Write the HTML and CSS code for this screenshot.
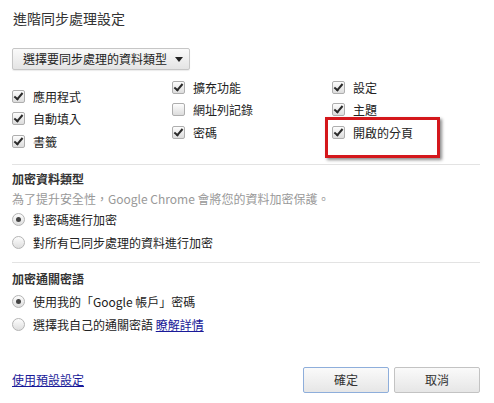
FILE: index.html
```html
<!DOCTYPE html>
<html lang="zh-Hant">

<head>
    <meta charset="UTF-8">
    <title>進階同步處理設定</title>
    <link rel="stylesheet" href="styles.css">
</head>

<body>
    <section class="dialog">
        <h1 class="title">進階同步處理設定</h1>

        <!-- 資料類型 -->
        <div class="select">
            <span>選擇要同步處理的資料類型</span>
            <span class="arrow"></span>
        </div>

        <div class="types">
            <ul class="col col-first">
                <li><span class="box checked"></span>應用程式</li>
                <li><span class="box checked"></span>自動填入</li>
                <li><span class="box checked"></span>書籤</li>
            </ul>
            <ul class="col">
                <li><span class="box checked"></span>擴充功能</li>
                <li><span class="box"></span>網址列記錄</li>
                <li><span class="box checked"></span>密碼</li>
            </ul>
            <ul class="col">
                <li><span class="box checked"></span>設定</li>
                <li><span class="box checked"></span>主題</li>
                <li><span class="box checked"></span>開啟的分頁</li>
            </ul>
        </div>

        <!-- 加密資料類型 -->
        <section class="group">
            <h3>加密資料類型</h3>
            <p class="note">為了提升安全性，Google Chrome 會將您的資料加密保護。</p>
            <div class="option"><span class="radio on"></span>對密碼進行加密</div>
            <div class="option"><span class="radio"></span>對所有已同步處理的資料進行加密</div>
        </section>

        <!-- 加密通關密語 -->
        <section class="group group-last">
            <h3>加密通關密語</h3>
            <div class="option"><span class="radio on"></span>使用我的「Google 帳戶」密碼</div>
            <div class="option"><span class="radio"></span>選擇我自己的通關密語&nbsp;<a href="#">瞭解詳情</a></div>
        </section>

        <footer class="footer">
            <a href="#">使用預設設定</a>
            <div class="buttons">
                <button class="btn btn-focus">確定</button>
                <button class="btn">取消</button>
            </div>
        </footer>
    </section>

    <div class="highlight"></div>
</body>

</html>
```

FILE: styles.css
```css
body {
    margin: 0;
    background: #fff;
    font-family: "Noto Sans CJK TC", "Open Sans", sans-serif;
    font-size: 12px;
    color: #222;
}

.dialog {
    width: 468px;
    padding: 6px 14px 0 12px;
}

.title {
    margin: 0 0 0 1px;
    font-size: 14px;
    font-weight: normal;
    line-height: 24px;
    color: #333;
}

.select {
    display: inline-flex;
    align-items: center;
    justify-content: space-between;
    box-sizing: border-box;
    width: 178px;
    height: 22px;
    margin-top: 18px;
    padding: 0 6px 0 10px;
    border: 1px solid #c6c6c6;
    border-radius: 2px;
    background: linear-gradient(#fafafa, #e4e4e4);
    box-shadow: 0 1px 1px rgba(0, 0, 0, .08);
    line-height: 20px;
}

.arrow {
    width: 0;
    height: 0;
    border-left: 4px solid transparent;
    border-right: 4px solid transparent;
    border-top: 5px solid #222;
}

.types {
    display: grid;
    grid-template-columns: 160px 160px 148px;
    margin-top: 6px;
    padding-bottom: 11px;
    border-bottom: 1px solid #e3e3e3;
}

.col {
    margin: 0;
    padding: 0;
    list-style: none;
}

.col-first {
    padding-top: 9px;
}

.col li {
    display: flex;
    align-items: center;
    height: 22.5px;
}

.box {
    position: relative;
    box-sizing: border-box;
    width: 13px;
    height: 13px;
    margin-right: 8px;
    border: 1px solid #aeaeae;
    border-radius: 2px;
    background: linear-gradient(#fdfdfd, #dcdcdc);
}

.box.checked::after {
    content: "";
    position: absolute;
    left: 3px;
    top: 0;
    width: 3px;
    height: 7px;
    border-right: 2px solid #2a2a2a;
    border-bottom: 2px solid #2a2a2a;
    transform: rotate(40deg);
}

.group {
    padding: 5px 0 8px;
    border-bottom: 1px solid #e3e3e3;
}

.group-last {
    padding-top: 7px;
    border-bottom: 0;
}

.group h3 {
    margin: 0 0 2px;
    font-size: 12px;
    font-weight: bold;
    line-height: 18px;
    color: #333;
}

.note {
    margin: 0;
    line-height: 18px;
    color: #999;
}

.option {
    display: flex;
    align-items: center;
    height: 23px;
}

.radio {
    position: relative;
    box-sizing: border-box;
    width: 13px;
    height: 13px;
    margin-right: 8px;
    border: 1px solid #b4b4b4;
    border-radius: 50%;
    background: linear-gradient(#fdfdfd, #dedede);
}

.radio.on::after {
    content: "";
    position: absolute;
    left: 3px;
    top: 3px;
    width: 5px;
    height: 5px;
    border-radius: 50%;
    background: #444;
}

a {
    color: #1a1a99;
    text-decoration: underline;
}

.footer {
    display: flex;
    align-items: center;
    justify-content: space-between;
    margin-top: 23px;
}

.buttons {
    display: flex;
    gap: 5px;
}

.btn {
    width: 86px;
    height: 26px;
    border: 1px solid #c3c3c3;
    border-radius: 2px;
    background: linear-gradient(#fafafa, #e6e6e6);
    font-family: inherit;
    font-size: 12px;
    color: #333;
}

.btn-focus {
    border-color: #8eaedb;
}

.highlight {
    position: absolute;
    left: 325px;
    top: 117px;
    width: 109px;
    height: 35px;
    border: 3px solid #d4171c;
    box-shadow: 2px 2px 3px rgba(0, 0, 0, .45);
}
```
